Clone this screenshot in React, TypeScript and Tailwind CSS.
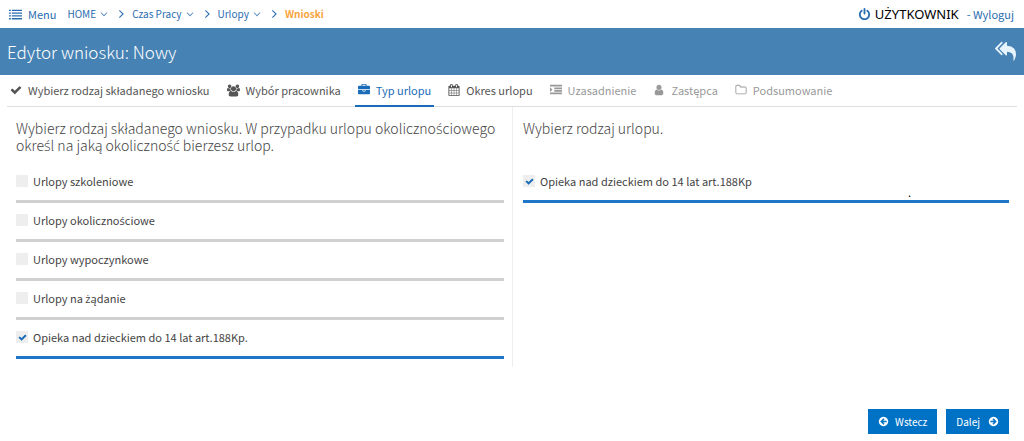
import { useState } from "react";
import type { ReactNode } from "react";

const paths = {
  list: "M0 224h256v192H0zM384 224h1408v192H384zM0 608h256v192H0zM384 608h1408v192H384zM0 992h256v192H0zM384 992h1408v192H384zM0 1376h256v192H0zM384 1376h1408v192H384z",
  check:
    "M1671 566q0 40-28 68l-724 724-136 136q-28 28-68 28t-68-28l-136-136-362-362q-28-28-28-68t28-68l136-136q28-28 68-28t68 28l294 295 656-657q28-28 68-28t68 28l136 136q28 28 28 68z",
  power:
    "M1664 896q0 156-61 298t-164 245-245 164-298 61-298-61-245-164-164-245-61-298q0-182 80.5-343t226.5-270q43-32 95.5-25t83.5 50q32 42 24.5 94.5t-49.5 84.5q-98 74-151.5 181t-53.5 228q0 104 40.5 198.5t109.5 163.5 163.5 109.5 198.5 40.5 198.5-40.5 163.5-109.5 109.5-163.5 40.5-198.5q0-121-53.5-228t-151.5-181q-42-32-49.5-84.5t24.5-94.5q31-43 84-50t95 25q146 109 226.5 270t80.5 343zm-640-768v640q0 52-38 90t-90 38-90-38-38-90v-640q0-52 38-90t90-38 90 38 38 90z",
  users:
    "M529 896q-162 5-265 128h-134q-82 0-138-40.5t-56-118.5q0-353 124-353 6 0 43.500 21t97.500 42.500 119 21.500q67 0 133-23-5 37-5 66 0 139 81 256zm1071 637q0 120-73 189.500t-194 69.500h-874q-121 0-194-69.500t-73-189.500q0-53 3.500-103.500t14-109 26.500-108.500 43-97.500 62-81 85.500-53.500 111.500-20q10 0 43 21.500t73 48 107 48 135 21.500 135-21.500 107-48 73-48 43-21.500q61 0 111.500 20t85.500 53.500 62 81 43 97.500 26.500 108.500 14 109 3.500 103.500zm-1024-1277q0 106-75 181t-181 75-181-75-75-181 75-181 181-75 181 75 75 181zm704 384q0 159-112.500 271.500t-271.500 112.500-271.500-112.500-112.500-271.500 112.500-271.500 271.500-112.500 271.500 112.500 112.500 271.500zm576 225q0 78-56 118.500t-138 40.500h-134q-103-123-265-128 81-117 81-256 0-29-5-66 66 23 133 23 59 0 119-21.500t97.500-42.500 43.500-21q124 0 124 353zm-128-609q0 106-75 181t-181 75-181-75-75-181 75-181 181-75 181 75 75 181z",
  briefcase:
    "M640 256h512v-128h-512v128zm1152 640v480q0 66-47 113t-113 47h-1472q-66 0-113-47t-47-113v-480h672v160q0 26 19 45t45 19h320q26 0 45-19t19-45v-160h672zm-768 0v128h-256v-128h256zm768-480v384h-1792v-384q0-66 47-113t113-47h352v-160q0-40 28-68t68-28h576q40 0 68 28t28 68v160h352q66 0 113 47t47 113z",
  calendar:
    "M192 1664h288v-288h-288v288zm352 0h320v-288h-320v288zm-352-352h288v-320h-288v320zm352 0h320v-320h-320v320zm-352-384h288v-288h-288v288zm736 736h320v-288h-320v288zm-384-736h320v-288h-320v288zm768 736h288v-288h-288v288zm-384-352h320v-320h-320v320zm-352-864v-288q0-13-9.500-22.500t-22.500-9.500h-64q-13 0-22.500 9.500t-9.500 22.500v288q0 13 9.500 22.500t22.500 9.500h64q13 0 22.500-9.500t9.500-22.500zm736 864h288v-320h-288v320zm-384-384h320v-288h-320v288zm384 0h288v-288h-288v288zm32-480v-288q0-13-9.500-22.500t-22.500-9.500h-64q-13 0-22.500 9.500t-9.500 22.500v288q0 13 9.500 22.500t22.500 9.500h64q13 0 22.500-9.500t9.500-22.500zm384-64v1280q0 52-38 90t-90 38h-1408q-52 0-90-38t-38-90v-1280q0-52 38-90t90-38h128v-96q0-66 47-113t113-47h64q66 0 113 47t47 113v96h384v-96q0-66 47-113t113-47h64q66 0 113 47t47 113v96h128q52 0 90 38t38 90z",
  indent:
    "M352 832q0 14-9 23l-288 288q-9 9-23 9-13 0-22.5-9.5t-9.5-22.5v-576q0-13 9.500-22.500t22.500-9.500q14 0 23 9l288 288q9 9 9 23zM0 1280h1792v256H0zM640 896h1152v256H640zM640 512h1152v256H640zM0 128h1792v256H0z",
  user: "M1536 1399q0 109-62.500 187t-150.500 78h-854q-88 0-150.500-78t-62.500-187q0-85 8.500-160.500t31.500-152 58.500-131 94-89 134.500-34.500q131 128 313 128t313-128q76 0 134.500 34.500t94 89 58.500 131 31.500 152 8.500 160.500zm-256-887q0 159-112.500 271.500t-271.500 112.500-271.500-112.500-112.500-271.500 112.500-271.500 271.500-112.500 271.500 112.500 112.500 271.500z",
  folder:
    "M1600 1312v-704q0-40-28-68t-68-28h-704q-40 0-68-28t-28-68v-64q0-40-28-68t-68-28h-320q-40 0-68 28t-28 68v960q0 40 28 68t68 28h1216q40 0 68-28t28-68zm128-704v704q0 92-66 158t-158 66h-1216q-92 0-158-66t-66-158v-960q0-92 66-158t158-66h320q92 0 158 66t66 158v32h672q92 0 158 66t66 158z",
  replyAll:
    "M640 1082v70q0 42-39 59-13 5-25 5-27 0-45-19l-512-512q-19-19-19-45t19-45l512-512q29-31 70-14 39 17 39 59v69l-397 398q-19 19-19 45t19 45zm1152 58q0 58-17 133.500t-38.500 138-48 125-40.500 90.500l-20 40q-8 17-28 17-6 0-9-1-25-8-23-34 43-400-106-565-64-71-170.500-110.500t-267.500-52.500v251q0 42-39 59-13 5-25 5-27 0-45-19l-512-512q-19-19-19-45t19-45l512-512q29-31 70-14 39 17 39 59v262q411 28 599 221 169 173 169 509z",
  angle:
    "M1395 736q0 13-10 23l-466 466q-10 10-23 10t-23-10l-466-466q-10-10-10-23t10-23l50-50q10-10 23-10t23 10l393 393 393-393q10-10 23-10t23 10l50 50q10 10 10 23z",
  arrowCircle:
    "M1408 960v-128q0-26-19-45t-45-19h-502l189-189q19-19 19-45t-19-45l-91-91q-18-18-45-18t-45 18l-362 362-91 91q-18 18-18 45t18 45l91 91 362 362q18 18 45 18t45-18l91-91q18-18 18-45t-18-45l-189-189h502q26 0 45-19t19-45zm256-64q0 209-103 385.500t-279.500 279.500-385.500 103-385.500-103-279.500-279.500-103-385.500 103-385.500 279.500-279.500 385.500-103 385.500 103 279.500 279.500 103 385.500z",
};

type IconName = keyof typeof paths;

function Icon({ name, className }: { name: IconName; className: string }) {
  return (
    <svg
      aria-hidden="true"
      viewBox={name === "users" ? "-64 0 1920 1792" : "0 0 1792 1792"}
      fill="currentColor"
      className={`shrink-0 ${className}`}
    >
      <path d={paths[name]} />
    </svg>
  );
}

function Polish({ text }: { text: string }) {
  return (
    <span>
      {text.split(/([śćż]+)/).map((part, i) =>
        i % 2 === 1 ? (
          <span key={i} className="font-['Open_Sans','Noto_Sans',sans-serif]">
            {part}
          </span>
        ) : (
          part
        ),
      )}
    </span>
  );
}

function Crumb({ children }: { children: ReactNode }) {
  return (
    <li className="flex items-center">
      <a href="#" className="flex items-center gap-0.5">
        {children}
        <Icon name="angle" className="size-3 opacity-80" />
      </a>
      <Icon name="angle" className="mx-1 size-[14px] -rotate-90" />
    </li>
  );
}

const steps: { label: string; icon: IconName; state: "open" | "active" | "disabled" }[] = [
  { label: "Wybierz rodzaj składanego wniosku", icon: "check", state: "open" },
  { label: "Wybór pracownika", icon: "users", state: "open" },
  { label: "Typ urlopu", icon: "briefcase", state: "active" },
  { label: "Okres urlopu", icon: "calendar", state: "open" },
  { label: "Uzasadnienie", icon: "indent", state: "disabled" },
  { label: "Zastępca", icon: "user", state: "disabled" },
  { label: "Podsumowanie", icon: "folder", state: "disabled" },
];

const stepStyle = {
  open: "border-transparent text-[#555]",
  active: "border-[#1a6cb8] text-[#1a6cb8]",
  disabled: "border-transparent text-[#999]",
};

const leaveTypes = [
  "Urlopy szkoleniowe",
  "Urlopy okolicznościowe",
  "Urlopy wypoczynkowe",
  "Urlopy na żądanie",
  "Opieka nad dzieckiem do 14 lat art.188Kp.",
];

function Option({
  label,
  checked,
  onChange,
  note,
}: {
  label: string;
  checked: boolean;
  onChange: () => void;
  note?: string;
}) {
  return (
    <div className={`flex h-[39px] border-b-3 ${checked ? "border-[#1f75c8]" : "border-[#d0d0d0]"}`}>
      <label className="flex items-center gap-[5px] pb-0.5 text-[11px] leading-4 text-[#444]">
        <span className="grid size-3 place-items-center">
          <input
            type="checkbox"
            checked={checked}
            onChange={onChange}
            className="col-start-1 row-start-1 size-3 appearance-none bg-[#eeeeee]"
          />
          {checked && (
            <Icon name="check" className="pointer-events-none col-start-1 row-start-1 size-[9px] text-[#1a6cb8]" />
          )}
        </span>
        <Polish text={label} />
      </label>
      {note && <span className="mr-[98px] ml-auto self-end text-[11px] leading-4 text-black">{note}</span>}
    </div>
  );
}

export default function App() {
  const [selected, setSelected] = useState(4);
  const [detail, setDetail] = useState(true);

  return (
    <div className="flex min-h-screen flex-col bg-white font-['Noto_Sans_CJK_JP','Noto_Sans',sans-serif]">
      <header className="flex h-7 items-center justify-between pr-[10px] pl-[9px] text-[#2a6db0]">
        <nav aria-label="Ścieżka" className="flex items-center">
          <button type="button" className="mr-[11px] flex items-center gap-1.5 text-[11px] leading-4">
            <Icon name="list" className="size-[13px]" />
            Menu
          </button>
          <ol className="flex items-center text-[10px] leading-4">
            <Crumb>HOME</Crumb>
            <Crumb>Czas Pracy</Crumb>
            <Crumb>Urlopy</Crumb>
            <li className="font-bold text-[#f7a540]">Wnioski</li>
          </ol>
        </nav>
        <div className="flex items-center text-[11px] leading-4">
          <Icon name="power" className="size-[13px]" />
          <span className="mr-2 ml-1 font-['Noto_Sans',sans-serif] text-[13px] text-black">UŻYTKOWNIK</span>
          <a href="#">- Wyloguj</a>
        </div>
      </header>

      <div className="flex h-[47px] items-center justify-between bg-[#4682b4] pr-2 pl-[7px] text-white">
        <h1 className="text-[17px] leading-6 font-light">Edytor wniosku: Nowy</h1>
        <button type="button" aria-label="Powrót">
          <Icon name="replyAll" className="size-[21px] text-[#e8f4fd]" />
        </button>
      </div>

      <nav aria-label="Kroki" className="mx-[7px] flex h-8 border-b border-[#ddd]">
        {steps.map((step) => (
          <button
            key={step.label}
            type="button"
            disabled={step.state === "disabled"}
            aria-current={step.state === "active" ? "step" : undefined}
            className={`mr-[11px] -mb-px flex items-center gap-1.5 border-b-2 px-[3px] text-[11px] leading-4 whitespace-nowrap ${stepStyle[step.state]}`}
          >
            <Icon name={step.icon} className={step.icon === "users" ? "size-[13px]" : "size-3"} />
            {step.label}
          </button>
        ))}
      </nav>

      <main className="mr-[5px] ml-[7px] grid grid-cols-2">
        <section className="h-[260px] border-r border-[#eee] pt-[13px] pr-2 pl-[9px]">
          <h2 className="mb-3 h-8 text-sm leading-4 font-light text-[#444]">
            <Polish text="Wybierz rodzaj składanego wniosku. W przypadku urlopu okolicznościowego określ na jaką okoliczność bierzesz urlop." />
          </h2>
          {leaveTypes.map((label, i) => (
            <Option key={label} label={label} checked={selected === i} onChange={() => setSelected(i)} />
          ))}
        </section>
        <section className="px-[10px] pt-[13px]">
          <h2 className="mb-3 h-8 text-sm leading-4 font-light text-[#444]">Wybierz rodzaj urlopu.</h2>
          <Option
            label="Opieka nad dzieckiem do 14 lat art.188Kp"
            checked={detail}
            onChange={() => setDetail(!detail)}
            note="."
          />
        </section>
      </main>

      <footer className="mt-auto flex justify-end gap-[9px] pr-[15px] pb-[7px] text-[10px] leading-4 text-white">
        <button type="button" className="flex h-[25px] items-center gap-1.5 bg-[#0072c6] px-[10px]">
          <Icon name="arrowCircle" className="size-[11px]" />
          Wstecz
        </button>
        <button type="button" className="flex h-[25px] items-center gap-2 bg-[#0072c6] px-[10px]">
          Dalej
          <Icon name="arrowCircle" className="size-[11px] rotate-180" />
        </button>
      </footer>
    </div>
  );
}
